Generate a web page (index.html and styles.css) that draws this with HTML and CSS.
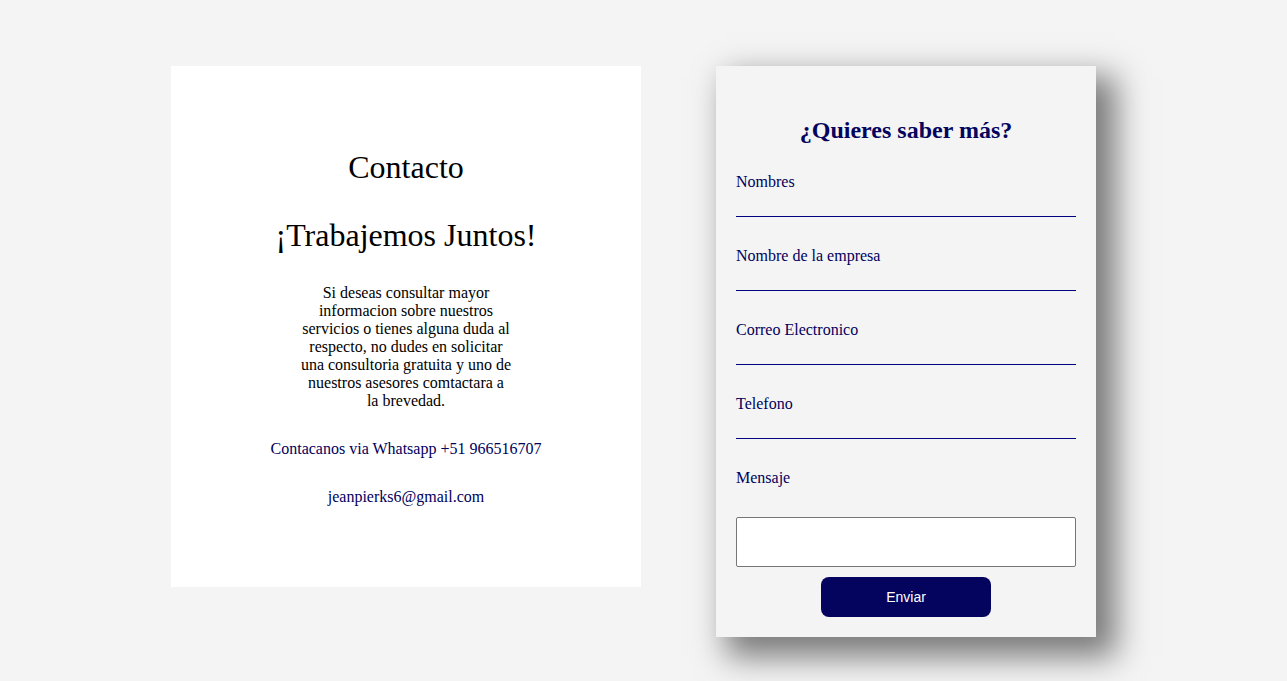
FILE: index.html
```html
<!DOCTYPE html>
<html>
	<head>
		<meta charset="UTF-8">
		<title>Contacto</title>
		<link rel="stylesheet" href="styles.css">
	</head>
	<body>
		<div id="wrap">
			<div class="info">
				<p class="title">Contacto</p>
				<p class="title">¡Trabajemos Juntos!</p>
				<p class="text">Si deseas consultar mayor informacion sobre nuestros servicios o tienes alguna duda al respecto, no dudes en solicitar una consultoria gratuita y uno de nuestros asesores comtactara a la brevedad.</p>
				<p class="link">Contacanos via Whatsapp +51 966516707</p>
				<p class="link mail">jeanpierks6@gmail.com</p>
			</div>
			<form class="form">
				<h2>¿Quieres saber más?</h2>
				<div class="field">
					<label>Nombres</label>
					<input type="text"/>
				</div>
				<div class="field">
					<label>Nombre de la empresa</label>
					<input type="text"/>
				</div>
				<div class="field">
					<label>Correo Electronico</label>
					<input type="text"/>
				</div>
				<div class="field">
					<label>Telefono</label>
					<input type="text"/>
				</div>
				<label class="msg">Mensaje</label>
				<textarea></textarea>
				<input class="send" type="button" value="Enviar"/>
			</form>
		</div>
	</body>
</html>
```

FILE: styles.css
```css
html, body {
	height: 100%;
}
body {
	margin: 0;
	background: #f4f4f4;
	font-family: "Liberation Serif", "Times New Roman", serif;
}
#wrap {
	display: flex;
	justify-content: center;
	align-items: flex-start;
	gap: 75px;
	min-height: 100%;
	box-sizing: border-box;
	padding: 66px 20px 0 0;
}
.info {
	width: 470px;
	height: 521px;
	box-sizing: border-box;
	padding-top: 3px;
	background: #fff;
	display: flex;
	flex-direction: column;
	justify-content: center;
	align-items: center;
	text-align: center;
}
.info p {
	margin: 0;
	font-size: 16px;
	line-height: 1.107;
	color: #000;
}
.info .title {
	font-size: 32px;
}
.info .title + .title {
	margin-top: 32px;
}
.info .text {
	width: 211px;
	margin-top: 31px;
	line-height: 18px;
}
.info .link {
	margin-top: 30px;
	color: #00005c;
}
.info .mail {
	margin-top: 30px;
}
.form {
	width: 340px;
	padding: 20px;
	background: #f4f4f4;
	box-shadow: 15px 15px 30px 5px #7a7a7a;
	color: #00005c;
}
.form h2 {
	margin: 31px 0 29px;
	font-size: 24px;
	text-align: center;
	color: #04045e;
}
.form label {
	display: block;
	height: 18px;
	line-height: 18px;
	font-size: 16px;
}
.field {
	margin-bottom: 30px;
}
.field input {
	display: block;
	width: 100%;
	height: 26px;
	box-sizing: border-box;
	margin: 0;
	padding: 0;
	border: none;
	border-bottom: 1px solid #000080;
	background: transparent;
	outline: none;
}
.form textarea {
	display: block;
	width: 100%;
	height: 50px;
	box-sizing: border-box;
	margin: 30px 0 0;
	border: 1px solid #767676;
	border-radius: 2px;
	background: #fff;
	resize: none;
}
.send {
	display: block;
	width: 170px;
	height: 40px;
	margin: 10px auto 0;
	border: none;
	border-radius: 8px;
	background: #04045e;
	color: #fff;
	font-family: "Liberation Sans", Arial, sans-serif;
	font-size: 14px;
}
```
